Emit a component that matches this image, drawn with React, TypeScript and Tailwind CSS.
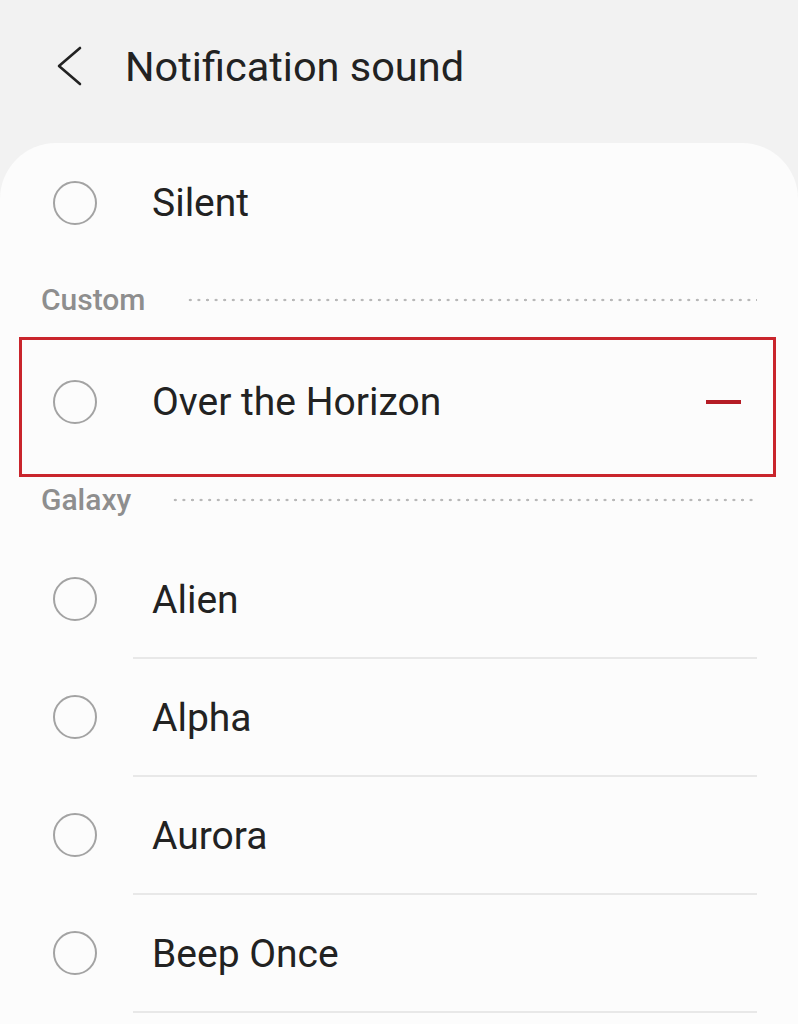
import type { ReactNode } from 'react'

const galaxy = ['Alien', 'Alpha', 'Aurora', 'Beep Once']

function Radio() {
  return (
    <span className="block h-[44px] w-[44px] shrink-0 rounded-full border-2 border-[#a3a3a3]" />
  )
}

function SectionHeader({ label, className }: { label: string; className?: string }) {
  return (
    <div className={`flex items-center pl-[41px] pr-[41px] ${className ?? ''}`}>
      <span className="text-[30px] font-medium leading-none text-[#8e8e8e]">{label}</span>
      <span className="ml-[40px] h-[4px] flex-1 bg-[radial-gradient(circle,#b8b8b8_1.1px,transparent_1.6px)] bg-[length:8.6px_4px] bg-repeat-x" />
    </div>
  )
}

function Row({ children, divider }: { children: ReactNode; divider?: boolean }) {
  return (
    <div className="flex h-[118px] flex-col">
      <div className="flex flex-1 items-center pl-[53px]">
        <Radio />
        <span className="ml-[55px] mt-[2px] text-[39px] leading-none text-[#222]">{children}</span>
      </div>
      {divider ? <div className="ml-[133px] mr-[41px] h-[2px] bg-[#e8e8e8]" /> : null}
    </div>
  )
}

export default function App() {
  return (
    <div
      className="h-[1024px] w-[798px] overflow-hidden bg-[#f2f2f2]"
      style={{ fontFamily: 'Roboto, "Noto Sans", sans-serif' }}
    >
      <header className="flex h-[143px] items-start pt-[43px]">
        <svg className="ml-[55px] mt-[3px] h-[40px] w-[28px]" viewBox="0 0 28 40" fill="none">
          <path d="M25 2 L4 20 L25 38" stroke="#222" strokeWidth="2.6" strokeLinecap="round" strokeLinejoin="round" />
        </svg>
        <h1 className="ml-[42px] text-[41.5px] leading-[48px] text-[#222]">Notification sound</h1>
      </header>

      <main className="min-h-[881px] rounded-t-[56px] bg-[#fcfcfc]">
        <div className="flex h-[120px] items-center pl-[53px]">
          <Radio />
          <span className="ml-[55px] text-[39px] leading-none text-[#222]">Silent</span>
        </div>

        <SectionHeader label="Custom" className="h-[74px]" />

        <div className="ml-[19px] flex h-[140px] w-[757px] items-center border-[3px] border-[#c9252c] pb-[10px] pl-[31px] pr-[32px]">
          <Radio />
          <span className="ml-[55px] flex-1 text-[39px] leading-none text-[#222]">Over the Horizon</span>
          <span className="block h-[4px] w-[35px] bg-[#b51c25]" />
        </div>

        <SectionHeader label="Galaxy" className="h-[46px]" />
        <div className="h-[18px]" />

        {galaxy.map((name) => (
          <Row key={name} divider>
            {name}
          </Row>
        ))}
      </main>
    </div>
  )
}
